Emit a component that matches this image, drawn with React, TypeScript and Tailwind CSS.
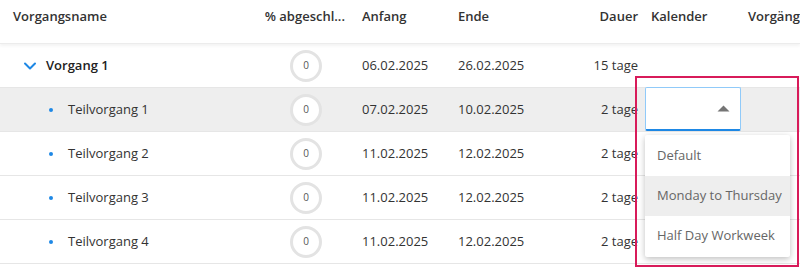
import React from 'react';

const rows = [
  { name: 'Vorgang 1', parent: true, start: '06.02.2025', end: '26.02.2025', dur: '15 tage' },
  { name: 'Teilvorgang 1', parent: false, start: '07.02.2025', end: '10.02.2025', dur: '2 tage', active: true },
  { name: 'Teilvorgang 2', parent: false, start: '11.02.2025', end: '12.02.2025', dur: '2 tage' },
  { name: 'Teilvorgang 3', parent: false, start: '11.02.2025', end: '12.02.2025', dur: '2 tage' },
  { name: 'Teilvorgang 4', parent: false, start: '11.02.2025', end: '12.02.2025', dur: '2 tage' },
];

const options = ['Default', 'Monday to Thursday', 'Half Day Workweek'];

function Progress() {
  return (
    <div className="ml-[37px] flex h-[32px] w-[32px] items-center justify-center rounded-full border-[3px] border-[#e3e3e3] bg-white text-[10px] text-[#555]">
      0
    </div>
  );
}

export default function App() {
  return (
    <div
      className="relative h-[268px] w-[800px] overflow-hidden bg-white text-[13px] text-[#333]"
      style={{ fontFamily: '"Open Sans", "Noto Sans", sans-serif' }}
    >
      {/* header */}
      <div className="flex h-[44px] items-start border-b border-[#ececec] pt-[7px] font-semibold shadow-[0_2px_3px_rgba(0,0,0,0.05)] whitespace-nowrap">
        <div className="w-[253px] shrink-0 pl-[13px]">Vorgangsname</div>
        <div className="w-[100px] shrink-0 pr-[8px] text-right">% abgeschl...</div>
        <div className="w-[96px] shrink-0 pl-[9px]">Anfang</div>
        <div className="w-[96px] shrink-0 pl-[9px]">Ende</div>
        <div className="w-[97px] shrink-0 pr-[4px] text-right">Dauer</div>
        <div className="w-[97px] shrink-0 pl-[9px]">Kalender</div>
        <div className="min-w-0 flex-1 overflow-hidden pl-[9px]">Vorgänge</div>
      </div>

      {rows.map((r) => (
        <div
          key={r.name}
          className={`flex h-[44px] items-center border-b border-[#e6e6e6] whitespace-nowrap ${r.active ? 'bg-[#eeeeee]' : ''}`}
        >
          <div className="flex w-[253px] shrink-0 items-center">
            {r.parent ? (
              <>
                <svg className="ml-[23px] h-[14px] w-[14px]" viewBox="0 0 14 14" fill="none">
                  <path d="M2 4.5 L7 9.5 L12 4.5" stroke="#1e88e5" strokeWidth="2" strokeLinecap="round" strokeLinejoin="round" />
                </svg>
                <span className="ml-[9px] font-semibold text-[#222]">{r.name}</span>
              </>
            ) : (
              <>
                <span className="ml-[49px] h-[4px] w-[4px] rounded-full bg-[#1e88e5]" />
                <span className="ml-[15px]">{r.name}</span>
              </>
            )}
          </div>
          <div className="w-[100px] shrink-0">
            <Progress />
          </div>
          <div className="w-[96px] shrink-0 pl-[9px]">{r.start}</div>
          <div className="w-[96px] shrink-0 pl-[9px]">{r.end}</div>
          <div className="w-[97px] shrink-0 pr-[4px] text-right">{r.dur}</div>
          <div className="w-[97px] shrink-0" />
          <div className="flex-1" />
        </div>
      ))}

      {/* open calendar select */}
      <div className="absolute left-[645px] top-[87px] flex h-[44px] w-[96px] items-center justify-end rounded-[2px] border border-[#90caf9] border-b-2 border-b-[#1e88e5] bg-white pr-[10px]">
        <svg className="h-[7px] w-[13px]" viewBox="0 0 13 7">
          <path d="M0.5 6.5 L6.5 0.5 L12.5 6.5 Z" fill="#757575" />
        </svg>
      </div>

      <div className="absolute left-[645px] top-[135px] w-[145px] rounded-[2px] bg-white py-[1px] shadow-[0_2px_6px_rgba(0,0,0,0.25)]">
        {options.map((o, i) => (
          <div
            key={o}
            className={`flex h-[40px] items-center pl-[12px] text-[13px] text-[#666] whitespace-nowrap ${i === 1 ? 'bg-[#eeeeee]' : ''}`}
          >
            {o}
          </div>
        ))}
      </div>

      {/* highlight frame */}
      <div className="pointer-events-none absolute left-[635px] top-[76px] h-[191px] w-[164px] border-2 border-[#d81b5a]" />
    </div>
  );
}
